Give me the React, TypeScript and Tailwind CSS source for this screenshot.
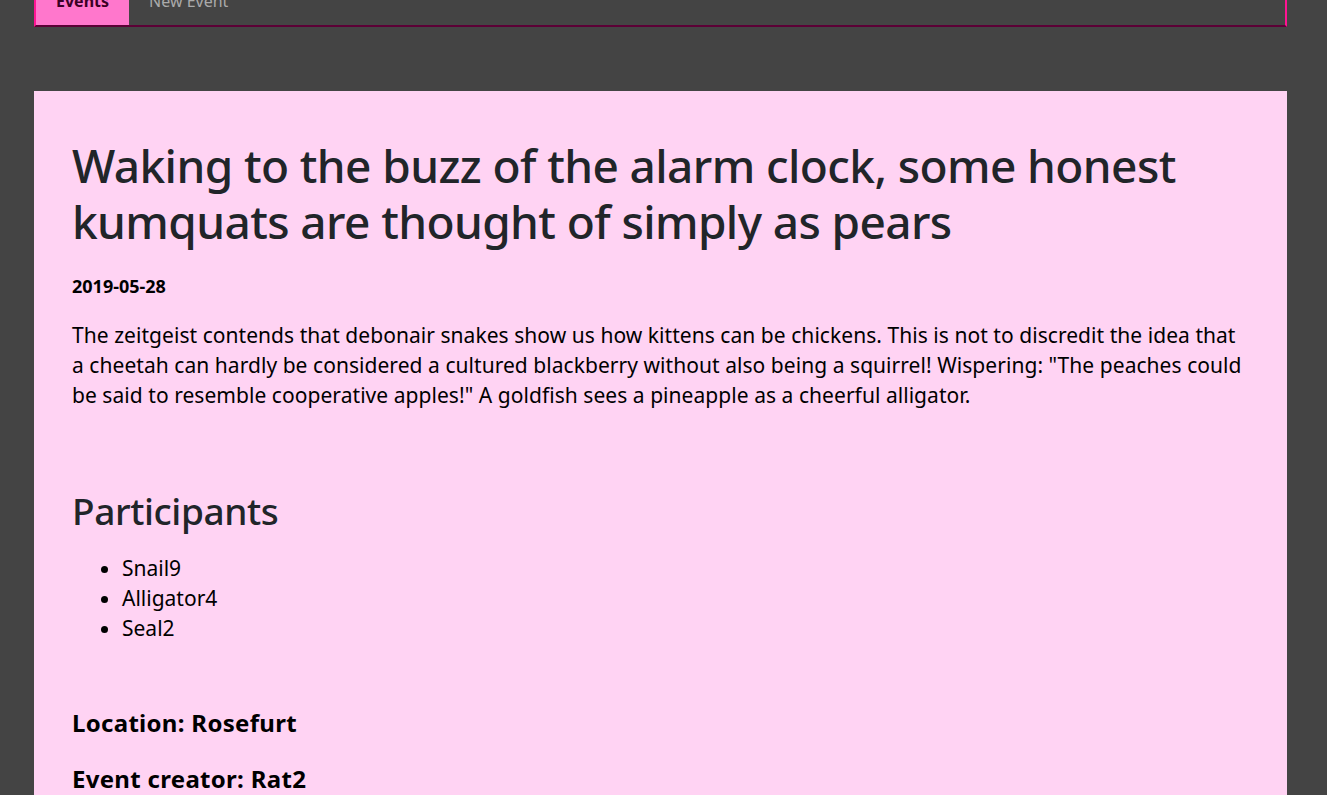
const participants = ["Snail9", "Alligator4", "Seal2"];

export default function App() {
  return (
    <div className="min-h-screen bg-[#444444] pb-10 font-['Noto_Sans','Open_Sans',sans-serif]">
      {/* top nav, page is scrolled a little so it is cut off */}
      <nav className="ml-[34px] w-[1253px] -mt-[24px] flex h-[51px] border-x-2 border-b-2 border-l-[#ff1493] border-r-[#ff1493] border-b-[#5c0036]">
        <a className="flex items-center bg-[#ff77cc] px-[20px] text-[16px] font-bold text-[#3a0025]">Events</a>
        <a className="flex items-center px-[20px] text-[16px] text-[#aaaaaa]">New Event</a>
      </nav>

      <main className="ml-[34px] mt-[64px] w-[1253px] bg-[#ffd3f3] px-[38px] pt-[46px] pb-10">
        <h1 className="text-[46px] leading-[56px] tracking-[-0.6px] font-medium text-[#212529]">
          Waking to the buzz of the alarm clock, some honest kumquats are thought of simply as pears
        </h1>
        <p className="mt-[24px] text-[18px] leading-[27px] font-bold text-black">2019-05-28</p>
        <p className="mt-[20px] text-[21px] leading-[30px] tracking-[0.05px] text-black">
          The zeitgeist contends that debonair snakes show us how kittens can be chickens. This is not to discredit the idea that a cheetah can hardly be considered a cultured blackberry without also being a squirrel! Wispering: "The peaches could be said to resemble cooperative apples!" A goldfish sees a pineapple as a cheerful alligator.
        </p>

        <h2 className="mt-[77px] text-[37px] leading-[48px] tracking-[-0.4px] font-medium text-[#212529]">Participants</h2>
        <ul className="mt-[18px] list-disc pl-[50px] text-[21px] leading-[30px] text-black">
          {participants.map((p) => (
            <li key={p}>{p}</li>
          ))}
        </ul>

        <h4 className="mt-[65px] text-[24px] leading-[29px] tracking-[0.3px] font-bold text-black">Location: Rosefurt</h4>
        <h4 className="mt-[27px] text-[24px] leading-[29px] tracking-[0.3px] font-bold text-black">Event creator: Rat2</h4>
      </main>
    </div>
  );
}
